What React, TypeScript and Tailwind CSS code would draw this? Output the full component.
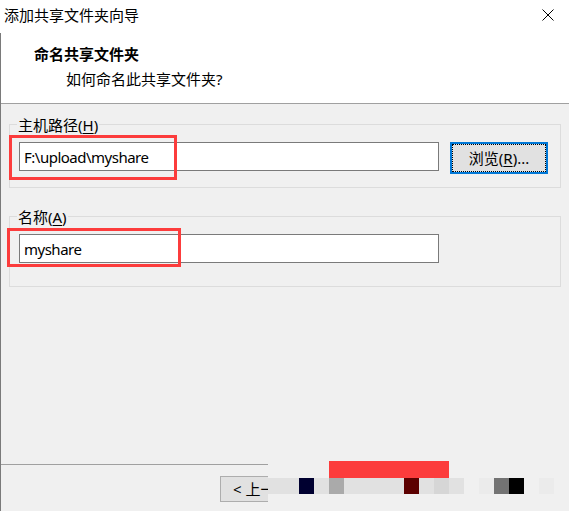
import React from "react";

const RED = "border-[#fc3c3c]";

function Blocks() {
  const blocks: { w: string; c: string }[] = [
    { w: "w-[31px]", c: "bg-[#e1e1e1]" },
    { w: "w-[15px]", c: "bg-[#000030]" },
    { w: "w-[15px]", c: "bg-[#e1e1e1]" },
    { w: "w-[15px]", c: "bg-[#aaaaaa]" },
    { w: "w-[60px]", c: "bg-[#e1e1e1]" },
    { w: "w-[15px]", c: "bg-[#5c0000]" },
    { w: "w-[15px]", c: "bg-[#e1e1e1]" },
    { w: "w-[15px]", c: "bg-[#d6d6d6]" },
    { w: "w-[15px]", c: "bg-[#e1e1e1]" },
    { w: "w-[15px]", c: "bg-[#f0f0f0]" },
    { w: "w-[15px]", c: "bg-[#ebebeb]" },
    { w: "w-[15px]", c: "bg-[#737373]" },
    { w: "w-[15px]", c: "bg-[#000000]" },
    { w: "w-[15px]", c: "bg-[#f0f0f0]" },
    { w: "w-[15px]", c: "bg-[#ebebeb]" },
  ];
  return (
    <div className="flex h-[16px]">
      {blocks.map((b, i) => (
        <div key={i} className={`${b.w} ${b.c} h-full shrink-0`} />
      ))}
    </div>
  );
}

export default function App() {
  return (
    <div className="w-[569px] h-[511px] bg-[#f0f0f0] flex flex-col overflow-hidden text-black text-[15px] font-['Noto_Sans','Noto_Sans_CJK_SC',sans-serif]">
      {/* title bar */}
      <div className="h-[33px] shrink-0 bg-white flex justify-between items-start">
        <div className="pl-[4px] pt-[5px] leading-[20px]">添加共享文件夹向导</div>
        <svg className="mt-[9px] mr-[15px]" width="12" height="12" viewBox="0 0 12 12">
          <path d="M0.5 0.5 L11.5 11.5 M11.5 0.5 L0.5 11.5" stroke="#000" strokeWidth="1" fill="none" />
        </svg>
      </div>

      <div className="flex-1 flex flex-col border-l border-[#7a7a7a]">
        {/* header */}
        <div className="h-[70px] bg-white shrink-0">
          <div className="pt-[11px] pl-[33px] font-bold leading-[20px]">命名共享文件夹</div>
          <div className="mt-[5px] pl-[65px] leading-[20px]">如何命名此共享文件夹?</div>
        </div>
        <div className="h-px bg-[#a0a0a0] shrink-0" />

        {/* group 1 */}
        <div className="ml-[8px] mt-[20px] w-[552px] h-[64px] border border-[#dcdcdc] flex flex-col shrink-0">
          <div className="self-start -mt-[10px] ml-[7px] px-[1px] bg-[#f0f0f0] leading-[20px]">
            主机路径(<span className="underline underline-offset-2">H</span>)
          </div>
          <div className="mt-[7px] ml-[9px] flex items-start gap-[11px]">
            <div className="relative w-[420px] h-[29px] border border-[#7a7a7a] bg-white pl-[4px] flex items-center">
              <span className="leading-[20px] tracking-[-0.5px]">F:\upload\myshare</span>
              <div className={`absolute left-[-11px] top-[-8px] w-[168px] h-[45px] border-[3px] ${RED}`} />
            </div>
            <div className="w-[98px] h-[32px] border-2 border-[#0078d7] bg-[#e1e1e1]">
              <div className="w-full h-full border border-dotted border-black flex items-center justify-center leading-[20px]">
                浏览(<span className="underline underline-offset-2">R</span>)...
              </div>
            </div>
          </div>
        </div>

        {/* group 2 */}
        <div className="ml-[8px] mt-[28px] w-[552px] h-[71px] border border-[#dcdcdc] flex flex-col shrink-0">
          <div className="self-start -mt-[10px] ml-[7px] px-[1px] bg-[#f0f0f0] leading-[20px]">
            名称(<span className="underline underline-offset-2">A</span>)
          </div>
          <div className="mt-[7px] ml-[9px] flex">
            <div className="relative w-[420px] h-[29px] border border-[#7a7a7a] bg-white pl-[4px] flex items-center">
              <span className="leading-[20px] tracking-[-0.5px]">myshare</span>
              <div className={`absolute left-[-13px] top-[-7px] w-[174px] h-[39px] border-[3px] ${RED}`} />
            </div>
          </div>
        </div>

        {/* footer */}
        <div className="mt-auto h-[50px] flex shrink-0">
          <div className="w-[267px] shrink-0 flex flex-col">
            <div className="mt-[3px] h-px bg-[#a0a0a0]" />
            <div className="mt-[11px] ml-[219px] w-[48px] h-[26px] border-l border-y border-[#adadad] bg-[#e1e1e1] overflow-hidden whitespace-nowrap pl-[12px] leading-[24px]">
              &lt; 上一步(B)
            </div>
          </div>
          <div className="flex flex-col">
            <div className="ml-[61px] w-[120px] h-[17px] bg-[#fc3c3c]" />
            <Blocks />
          </div>
        </div>
      </div>
    </div>
  );
}
